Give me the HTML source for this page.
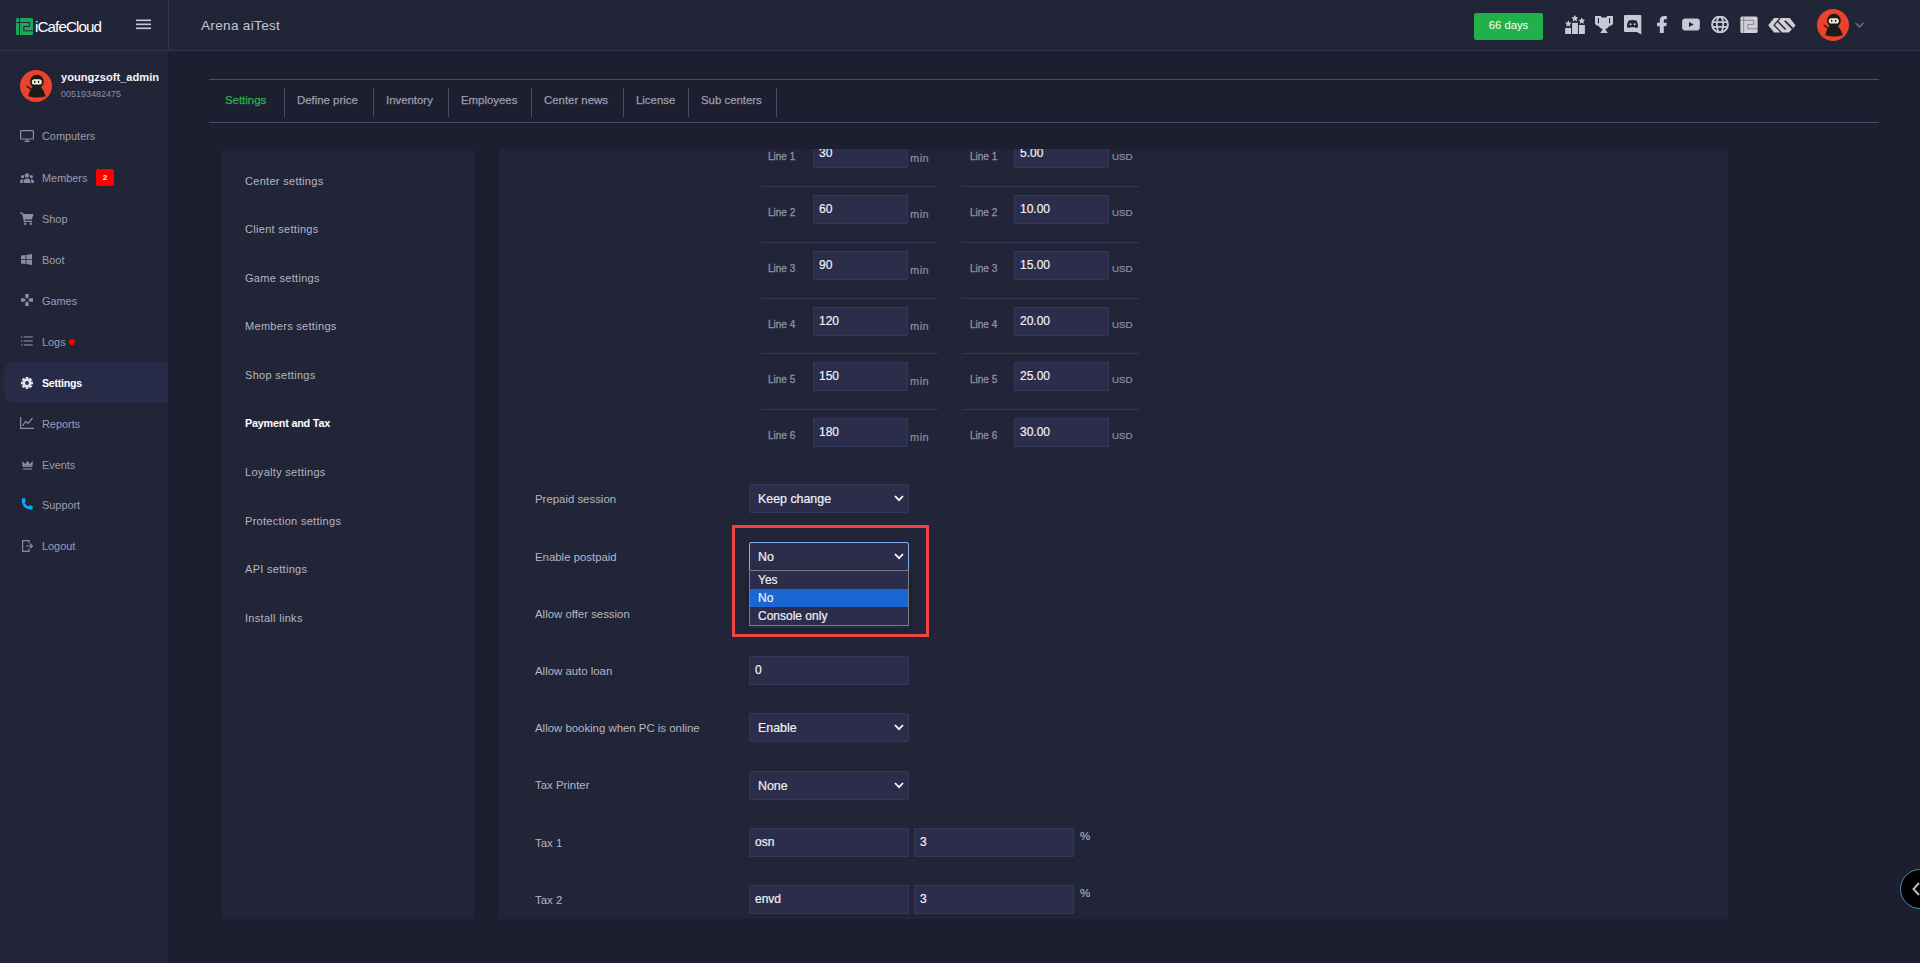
<!DOCTYPE html>
<html><head><meta charset="utf-8"><style>
*{margin:0;padding:0;box-sizing:border-box}
html,body{width:1920px;height:963px;overflow:hidden;background:#1d1e2f;font-family:"Liberation Sans",sans-serif}
.a{position:absolute;white-space:nowrap}
#hdr{position:absolute;left:0;top:0;width:1920px;height:51px;background:#222538;border-bottom:1px solid #32354f}
#hdrsep{position:absolute;left:168px;top:0;width:1px;height:50px;background:#32354f}
#side{position:absolute;left:0;top:51px;width:168px;height:912px;background:#222538}
.nav{position:absolute;left:42px;font-size:10.9px;color:#9a9db2;line-height:14px;white-space:nowrap}
.tabs{position:absolute;left:209px;top:79px;width:1670px;height:44px;border-top:1px solid #4a4c61;border-bottom:1px solid #4a4c61}
.tab{position:absolute;top:13px;font-size:11.4px;color:#9c9eae;-webkit-text-stroke:0.25px;line-height:14px;white-space:nowrap}
.tsep{position:absolute;top:8px;width:1px;height:29px;background:#4a4c61}
.card{position:absolute;background:#222538;border-radius:4px}
.sub{position:absolute;left:245px;font-size:11px;letter-spacing:0.3px;color:#b4b6c4;line-height:14px;white-space:nowrap}
.lbl{position:absolute;font-size:11.4px;color:#b4b6c4;line-height:14px;white-space:nowrap}
.inp{position:absolute;-webkit-text-stroke:0.2px #f0f0f5;background:#2b2d4b;height:29px;color:#f0f0f5;font-size:12px;line-height:27px;padding-left:5px;border:1px solid #34365a;white-space:nowrap}
.sel{position:absolute;-webkit-text-stroke:0.2px #f0f0f5;background:#2b2d4b;height:29px;color:#f0f0f5;font-size:12.4px;line-height:28px;padding-left:8px;border:1px solid #34365a;width:160px;border-radius:2px;white-space:nowrap}
.ln{position:absolute;font-size:10px;color:#8e90a3;-webkit-text-stroke:0.3px #8e90a3;line-height:12px;white-space:nowrap}
.unit{position:absolute;font-size:11px;letter-spacing:0.5px;color:#8e90a3;-webkit-text-stroke:0.2px #8e90a3;line-height:12px;white-space:nowrap}
.rowline{position:absolute;height:1px;background:#34375a}
.chev{position:absolute;right:4px;top:10px;width:10px;height:7px}
</style></head><body>
<div id="hdr"></div><div id="hdrsep"></div><div id="side"></div>
<svg class="a" style="left:16px;top:18px" width="17" height="17" viewBox="0 0 17 17">
<rect x="0" y="0" width="17" height="17" rx="1.5" fill="#1fa65a"/>
<path d="M3.5 0 V17 M0 4.5 H13.5 V8.5 H7.8 V12.8 H17" fill="none" stroke="#222538" stroke-width="1"/></svg>
<div class="a" style="left:35px;top:18px;font-size:15.2px;color:#fff;letter-spacing:-0.9px;line-height:18px">iCafeCloud</div>
<svg class="a" style="left:136px;top:19px" width="15" height="11" viewBox="0 0 15 11">
<rect x="0" y="0.5" width="15" height="1.6" fill="#c8cad6"/><rect x="0" y="4.5" width="15" height="1.6" fill="#c8cad6"/><rect x="0" y="8.5" width="15" height="1.6" fill="#c8cad6"/></svg>
<div class="a" style="left:201px;top:16.5px;font-size:13.6px;letter-spacing:0.3px;color:#c4c5cf;line-height:17px">Arena aiTest</div>
<div class="a" style="left:1474px;top:13px;width:69px;height:27px;background:#20b14a;border-radius:2px;color:#fff;font-size:11.3px;line-height:25.5px;text-align:center">66 days</div>
<svg class="a" style="left:1565px;top:15px" width="20" height="19" viewBox="0 0 20 19" fill="#c6c9d6">
<rect x="0.1" y="13" width="6" height="6"/><rect x="7.1" y="7.8" width="5.8" height="11.2"/><rect x="13.9" y="10" width="6" height="9"/>
<path d="M3.30 5.30 L4.33 7.38 L6.63 7.72 L4.96 9.34 L5.36 11.63 L3.30 10.55 L1.24 11.63 L1.64 9.34 L-0.03 7.72 L2.27 7.38Z"/><path d="M9.90 -0.10 L10.96 2.04 L13.32 2.39 L11.61 4.06 L12.02 6.41 L9.90 5.30 L7.78 6.41 L8.19 4.06 L6.48 2.39 L8.84 2.04Z"/><path d="M16.80 2.50 L17.83 4.58 L20.13 4.92 L18.46 6.54 L18.86 8.83 L16.80 7.75 L14.74 8.83 L15.14 6.54 L13.47 4.92 L15.77 4.58Z"/></svg>
<svg class="a" style="left:1595px;top:16px" width="18" height="17" viewBox="0 0 18 17">
<path d="M0 0 H5.8 L6.6 1.6 H11.4 L12.2 0 H18 V7.6 Q18 8.6 16.5 9.2 L14.3 10.2 Q13 12.2 10.3 13.3 L12.8 17 H5.2 L7.7 13.3 Q5 12.2 3.7 10.2 L1.5 9.2 Q0 8.6 0 7.6Z" fill="#c6c9d6"/>
<rect x="2.9" y="2" width="1.1" height="5.3" fill="#222538"/><rect x="14" y="2" width="1.1" height="5.3" fill="#222538"/></svg>
<svg class="a" style="left:1624px;top:15px" width="18" height="20" viewBox="0 0 18 20">
<path d="M1 0 H16.3 Q17.3 0 17.3 1 V19.5 L13.1 16.9 H1 Q0 16.9 0 15.9 V1 Q0 0 1 0Z" fill="#c6c9d6"/>
<path d="M4.6 5.6 Q8.6 4.2 12.5 5.6 Q14.2 8.5 14 12.2 Q12.8 12.9 11.6 13 L10.9 11.9 Q8.6 12.5 6.3 11.9 L5.6 13 Q4.3 12.9 3 12.2 Q2.9 8.5 4.6 5.6Z" fill="#222538"/>
<circle cx="6.6" cy="9.3" r="1.05" fill="#c6c9d6"/><circle cx="10.6" cy="9.3" r="1.05" fill="#c6c9d6"/></svg>
<svg class="a" style="left:1657px;top:16px" width="10" height="17" viewBox="0 0 10 17" fill="#c6c9d6">
<path d="M2.8 17 V10.2 H0 V6.8 H2.8 V4.6 Q2.8 0 7.2 0 H9.8 V3.3 H7.9 Q6.8 3.3 6.8 4.5 V6.8 H9.8 L9.3 10.2 H6.8 V17Z"/></svg>
<svg class="a" style="left:1682px;top:18px" width="18" height="13" viewBox="0 0 18 13">
<rect x="0.1" y="0.6" width="17.7" height="11.8" rx="3" fill="#c6c9d6"/><path d="M7 4 L11.8 6.5 L7 9Z" fill="#222538"/></svg>
<svg class="a" style="left:1711px;top:16px" width="18" height="17" viewBox="0 0 18 17" fill="none" stroke="#c6c9d6">
<circle cx="9" cy="8.5" r="7.9" stroke-width="2"/><ellipse cx="9" cy="8.5" rx="3.2" ry="8" stroke-width="1.8"/><path d="M1 6.1 H17 M1 10.9 H17" stroke-width="1.7"/></svg>
<svg class="a" style="left:1740px;top:16px" width="18" height="17" viewBox="0 0 18 17">
<rect x="0.4" y="0.4" width="17.2" height="16.6" rx="1.5" fill="#d0d0d6"/>
<path d="M3.7 0.4 V17 M0.4 4.3 H13.6 V8.4 H7.8 V12.8 H17.6" fill="none" stroke="#7d7f8e" stroke-width="0.9"/></svg>
<svg class="a" style="left:1768px;top:18px" width="28" height="15" viewBox="0 0 28 15">
<path d="M0.2 7.2 L6.1 0 H21.8 L27.6 7.4 L20.8 14.6 H6.1Z" fill="#d0d0d4"/>
<path d="M12.1 0.1 L6.1 7.2 L13.6 14.8" fill="none" stroke="#222538" stroke-width="1.3"/>
<path d="M9.8 3.5 L17.6 11.5" fill="none" stroke="#222538" stroke-width="1.5"/>
<path d="M16.9 2.9 L24.6 10.7" fill="none" stroke="#222538" stroke-width="1.8"/></svg>
<svg class="a" style="left:1817px;top:9px" width="32" height="32" viewBox="0 0 32 32"><circle cx="16" cy="16" r="16" fill="#ec412a"/>
<path d="M12.6 16.8 Q9.3 20.5 8.2 26.2 Q17 28.6 25.8 26.2 Q24 20.5 20.8 16.8Z" fill="#1c1b1c"/>
<circle cx="16.9" cy="11.6" r="6.9" fill="#1c1b1c"/>
<rect x="11.8" y="9.3" width="10" height="5.3" rx="2.6" fill="#f3ecdb"/>
<ellipse cx="14.7" cy="11.9" rx="0.8" ry="1.1" fill="#1c1b1c"/><ellipse cx="18.6" cy="11.9" rx="0.8" ry="1.1" fill="#1c1b1c"/>
<path d="M6.8 16.2 L11.3 19.4" stroke="#1c1b1c" stroke-width="1.5"/></svg>
<svg class="a" style="left:1855px;top:22px" width="9" height="6" viewBox="0 0 9 6"><path d="M0.5 0.8 L4.5 4.8 L8.5 0.8" fill="none" stroke="#6880aa" stroke-width="1.2"/></svg>
<svg class="a" style="left:20px;top:70px" width="32" height="32" viewBox="0 0 32 32"><circle cx="16" cy="16" r="16" fill="#ec412a"/>
<path d="M12.6 16.8 Q9.3 20.5 8.2 26.2 Q17 28.6 25.8 26.2 Q24 20.5 20.8 16.8Z" fill="#1c1b1c"/>
<circle cx="16.9" cy="11.6" r="6.9" fill="#1c1b1c"/>
<rect x="11.8" y="9.3" width="10" height="5.3" rx="2.6" fill="#f3ecdb"/>
<ellipse cx="14.7" cy="11.9" rx="0.8" ry="1.1" fill="#1c1b1c"/><ellipse cx="18.6" cy="11.9" rx="0.8" ry="1.1" fill="#1c1b1c"/>
<path d="M6.8 16.2 L11.3 19.4" stroke="#1c1b1c" stroke-width="1.5"/></svg>
<div class="a" style="left:61px;top:71px;font-size:11.1px;font-weight:bold;color:#f4f4f8;line-height:13px">youngzsoft_admin</div>
<div class="a" style="left:61px;top:89px;font-size:9px;color:#8c8fa3;line-height:11px">005193482475</div>
<div class="a" style="left:4px;top:362px;width:164px;height:41px;background:#282b47;border-radius:10px 0 0 10px"></div>
<div class="nav" style="top:128.5px">Computers</div>
<div class="nav" style="top:170.5px">Members</div>
<div class="nav" style="top:211.5px">Shop</div>
<div class="nav" style="top:252.5px">Boot</div>
<div class="nav" style="top:293.5px">Games</div>
<div class="nav" style="top:334.5px">Logs</div>
<div class="nav" style="top:375.5px;color:#fff;font-weight:bold;font-size:10.6px;letter-spacing:-0.25px">Settings</div>
<div class="nav" style="top:416.5px">Reports</div>
<div class="nav" style="top:457.5px">Events</div>
<div class="nav" style="top:497.5px">Support</div>
<div class="nav" style="top:538.5px">Logout</div>
<div class="a" style="left:96px;top:169px;width:18px;height:17px;background:#fe0000;border-radius:2px;color:#fff;font-size:8px;font-weight:bold;text-align:center;line-height:17px">2</div>
<div class="a" style="left:69px;top:339px;width:6px;height:6px;border-radius:50%;background:#fe0000"></div>
<svg class="a" style="left:20px;top:130px" width="14" height="12" viewBox="0 0 14 12" fill="none" stroke="#8a8ea6" stroke-width="1.2"><rect x="0.6" y="0.6" width="12.8" height="8.4" rx="0.8"/><path d="M7 9 V11 M4.5 11.4 H9.5"/></svg>
<svg class="a" style="left:20px;top:173px" width="14" height="10" viewBox="0 0 14 10" fill="#8a8ea6"><circle cx="7" cy="2.4" r="2.2"/><circle cx="2.6" cy="3.6" r="1.6"/><circle cx="11.4" cy="3.6" r="1.6"/><path d="M3.5 10 Q3.5 5.6 7 5.6 Q10.5 5.6 10.5 10Z M0 10 Q0 6.5 2.6 6.3 Q3.2 6.3 3.4 6.6 Q2.6 8 2.7 10Z M14 10 Q14 6.5 11.4 6.3 Q10.8 6.3 10.6 6.6 Q11.4 8 11.3 10Z"/></svg>
<svg class="a" style="left:20px;top:212px" width="14" height="13" viewBox="0 0 14 13" fill="#8a8ea6"><path d="M0 0.5 H2.8 L3.4 2 H13.5 L11.8 7.5 H4.6 L5 8.8 H12 V10 H4 L2 1.7 H0Z"/><circle cx="5.3" cy="11.7" r="1.2"/><circle cx="10.8" cy="11.7" r="1.2"/></svg>
<svg class="a" style="left:21px;top:254px" width="11" height="11" viewBox="0 0 11 11" fill="#8a8ea6"><path d="M0 1.6 L4.6 1 V5.2 H0Z M5.4 0.9 L11 0 V5.2 H5.4Z M0 5.9 H4.6 V10 L0 9.4Z M5.4 5.9 H11 V11 L5.4 10.1Z"/></svg>
<svg class="a" style="left:21px;top:294px" width="12" height="12" viewBox="0 0 12 12" fill="#8a8ea6"><path d="M4.3 0 H7.7 V3.3 L6 4.8 L4.3 3.3Z M4.3 12 H7.7 V8.7 L6 7.2 L4.3 8.7Z M0 4.3 V7.7 H3.3 L4.8 6 L3.3 4.3Z M12 4.3 V7.7 H8.7 L7.2 6 L8.7 4.3Z"/></svg>
<svg class="a" style="left:21px;top:336px" width="12" height="10" viewBox="0 0 12 10" fill="#8a8ea6"><rect x="0" y="0.3" width="1.3" height="1.3"/><rect x="0" y="4.3" width="1.3" height="1.3"/><rect x="0" y="8.3" width="1.3" height="1.3"/><rect x="2.8" y="0.4" width="9" height="1.1"/><rect x="2.8" y="4.4" width="9" height="1.1"/><rect x="2.8" y="8.4" width="9" height="1.1"/></svg>
<svg class="a" style="left:21px;top:377px" width="12" height="12" viewBox="-6 -6 12 12" fill="#dfe2ee"><circle r="4.4"/><rect x="-1.35" y="-6.1" width="2.7" height="3" transform="rotate(0)"/><rect x="-1.35" y="-6.1" width="2.7" height="3" transform="rotate(45)"/><rect x="-1.35" y="-6.1" width="2.7" height="3" transform="rotate(90)"/><rect x="-1.35" y="-6.1" width="2.7" height="3" transform="rotate(135)"/><rect x="-1.35" y="-6.1" width="2.7" height="3" transform="rotate(180)"/><rect x="-1.35" y="-6.1" width="2.7" height="3" transform="rotate(225)"/><rect x="-1.35" y="-6.1" width="2.7" height="3" transform="rotate(270)"/><rect x="-1.35" y="-6.1" width="2.7" height="3" transform="rotate(315)"/><circle r="1.9" fill="#282b47"/></svg>
<svg class="a" style="left:20px;top:417px" width="14" height="12" viewBox="0 0 14 12" fill="none" stroke="#8a8ea6" stroke-width="1.2"><path d="M0.6 0 V11.4 H14 M2.5 9 L5.5 4.5 L8 6.5 L12.5 1"/></svg>
<svg class="a" style="left:22px;top:461px" width="11" height="9" viewBox="0 0 11 9" fill="#8a8ea6"><path d="M0 0 L3.2 3 L5.5 0 L7.8 3 L11 0 L10.2 6 H0.8Z"/><path d="M1.8 4.6 H9.2 L9 5.2 H2Z" fill="#222538" opacity="0.5"/><rect x="1" y="7.4" width="9" height="1.1"/></svg>
<svg class="a" style="left:21px;top:498px" width="12" height="12" viewBox="0 0 12 12" fill="#0aa8ff"><path d="M0.6 1.6 Q0.6 0.4 1.8 0.3 L3.6 0.1 L5 3.3 L3.5 4.6 Q4.8 7.4 7.4 8.6 L8.7 7.1 L11.9 8.5 L11.7 10.3 Q11.6 11.7 10.3 11.7 Q5.5 11.6 2.6 8.3 Q0.6 5.8 0.6 1.6Z"/></svg>
<svg class="a" style="left:22px;top:540px" width="11" height="12" viewBox="0 0 11 12" fill="none" stroke="#8a8ea6" stroke-width="1.2"><path d="M7 3.3 V0.6 H0.6 V11.4 H7 V8.7"/><path d="M4 6 H10.5 M8.2 3.8 L10.5 6 L8.2 8.2"/></svg>
<div class="tabs">
<div class="tab" style="left:16px;color:#2cb54c">Settings</div><div class="tsep" style="left:75px"></div>
<div class="tab" style="left:88px">Define price</div><div class="tsep" style="left:164px"></div>
<div class="tab" style="left:177px">Inventory</div><div class="tsep" style="left:239px"></div>
<div class="tab" style="left:252px">Employees</div><div class="tsep" style="left:322px"></div>
<div class="tab" style="left:335px">Center news</div><div class="tsep" style="left:414px"></div>
<div class="tab" style="left:427px">License</div><div class="tsep" style="left:479px"></div>
<div class="tab" style="left:492px">Sub centers</div><div class="tsep" style="left:567px"></div>
</div>
<div class="card" style="left:221px;top:149px;width:254px;height:770px"></div>
<div class="sub" style="top:173.5px">Center settings</div>
<div class="sub" style="top:222px">Client settings</div>
<div class="sub" style="top:270.5px">Game settings</div>
<div class="sub" style="top:319px">Members settings</div>
<div class="sub" style="top:367.5px">Shop settings</div>
<div class="sub" style="top:416px;color:#fff;font-weight:bold;font-size:10.8px;letter-spacing:-0.2px">Payment and Tax</div>
<div class="sub" style="top:465px">Loyalty settings</div>
<div class="sub" style="top:513.5px">Protection settings</div>
<div class="sub" style="top:562px">API settings</div>
<div class="sub" style="top:611px">Install links</div>
<div class="card" style="left:499px;top:149px;width:1229px;height:770px;overflow:hidden;border-radius:0">
<div class="ln" style="left:269px;top:2.0px">Line 1</div>
<div class="inp" style="left:314px;top:-10px;width:95px">30</div>
<div class="unit" style="left:411px;top:2.5px">min</div>
<div class="ln" style="left:471px;top:2.0px">Line 1</div>
<div class="inp" style="left:515px;top:-10px;width:95px">5.00</div>
<div class="unit" style="left:613px;top:1.5px;font-size:9.8px;letter-spacing:0">USD</div>
<div class="ln" style="left:269px;top:58.0px">Line 2</div>
<div class="inp" style="left:314px;top:46px;width:95px">60</div>
<div class="unit" style="left:411px;top:58.5px">min</div>
<div class="ln" style="left:471px;top:58.0px">Line 2</div>
<div class="inp" style="left:515px;top:46px;width:95px">10.00</div>
<div class="unit" style="left:613px;top:57.5px;font-size:9.8px;letter-spacing:0">USD</div>
<div class="ln" style="left:269px;top:114.0px">Line 3</div>
<div class="inp" style="left:314px;top:102px;width:95px">90</div>
<div class="unit" style="left:411px;top:114.5px">min</div>
<div class="ln" style="left:471px;top:114.0px">Line 3</div>
<div class="inp" style="left:515px;top:102px;width:95px">15.00</div>
<div class="unit" style="left:613px;top:113.5px;font-size:9.8px;letter-spacing:0">USD</div>
<div class="ln" style="left:269px;top:170.0px">Line 4</div>
<div class="inp" style="left:314px;top:158px;width:95px">120</div>
<div class="unit" style="left:411px;top:170.5px">min</div>
<div class="ln" style="left:471px;top:170.0px">Line 4</div>
<div class="inp" style="left:515px;top:158px;width:95px">20.00</div>
<div class="unit" style="left:613px;top:169.5px;font-size:9.8px;letter-spacing:0">USD</div>
<div class="ln" style="left:269px;top:225.0px">Line 5</div>
<div class="inp" style="left:314px;top:213px;width:95px">150</div>
<div class="unit" style="left:411px;top:225.5px">min</div>
<div class="ln" style="left:471px;top:225.0px">Line 5</div>
<div class="inp" style="left:515px;top:213px;width:95px">25.00</div>
<div class="unit" style="left:613px;top:224.5px;font-size:9.8px;letter-spacing:0">USD</div>
<div class="ln" style="left:269px;top:281.0px">Line 6</div>
<div class="inp" style="left:314px;top:269px;width:95px">180</div>
<div class="unit" style="left:411px;top:281.5px">min</div>
<div class="ln" style="left:471px;top:281.0px">Line 6</div>
<div class="inp" style="left:515px;top:269px;width:95px">30.00</div>
<div class="unit" style="left:613px;top:280.5px;font-size:9.8px;letter-spacing:0">USD</div>
<div class="rowline" style="left:262px;top:37px;width:177px"></div>
<div class="rowline" style="left:463px;top:37px;width:177px"></div>
<div class="rowline" style="left:262px;top:93px;width:177px"></div>
<div class="rowline" style="left:463px;top:93px;width:177px"></div>
<div class="rowline" style="left:262px;top:149px;width:177px"></div>
<div class="rowline" style="left:463px;top:149px;width:177px"></div>
<div class="rowline" style="left:262px;top:204px;width:177px"></div>
<div class="rowline" style="left:463px;top:204px;width:177px"></div>
<div class="rowline" style="left:262px;top:260px;width:177px"></div>
<div class="rowline" style="left:463px;top:260px;width:177px"></div>
<div class="lbl" style="left:36px;top:343px">Prepaid session</div>
<div class="lbl" style="left:36px;top:401px">Enable postpaid</div>
<div class="lbl" style="left:36px;top:458px">Allow offer session</div>
<div class="lbl" style="left:36px;top:515px">Allow auto loan</div>
<div class="lbl" style="left:36px;top:572px">Allow booking when PC is online</div>
<div class="lbl" style="left:36px;top:629px">Tax Printer</div>
<div class="lbl" style="left:36px;top:687px">Tax 1</div>
<div class="lbl" style="left:36px;top:744px">Tax 2</div>
<div class="sel" style="left:250px;top:335px;">Keep change<svg class="chev" viewBox="0 0 10 7"><path d="M1 1 L5 5.2 L9 1" fill="none" stroke="#fff" stroke-width="1.8"/></svg></div>
<div class="sel" style="left:250px;top:450px;">No<svg class="chev" viewBox="0 0 10 7"><path d="M1 1 L5 5.2 L9 1" fill="none" stroke="#fff" stroke-width="1.8"/></svg></div>
<div class="sel" style="left:250px;top:393px;border:1px solid #80b0f2;line-height:28px;padding-left:8px">No<svg class="chev" viewBox="0 0 10 7"><path d="M1 1 L5 5.2 L9 1" fill="none" stroke="#fff" stroke-width="1.8"/></svg></div>
<div class="inp" style="left:250px;top:507px;width:160px">0</div>
<div class="sel" style="left:250px;top:564px;">Enable<svg class="chev" viewBox="0 0 10 7"><path d="M1 1 L5 5.2 L9 1" fill="none" stroke="#fff" stroke-width="1.8"/></svg></div>
<div class="sel" style="left:250px;top:622px;">None<svg class="chev" viewBox="0 0 10 7"><path d="M1 1 L5 5.2 L9 1" fill="none" stroke="#fff" stroke-width="1.8"/></svg></div>
<div class="inp" style="left:250px;top:679px;width:160px">osn</div>
<div class="inp" style="left:415px;top:679px;width:160px">3</div>
<div class="inp" style="left:250px;top:736px;width:160px">envd</div>
<div class="inp" style="left:415px;top:736px;width:160px">3</div>
<div class="unit" style="left:581px;top:681px;font-size:11.5px;color:#b4b6c4">%</div>
<div class="unit" style="left:581px;top:738px;font-size:11.5px;color:#b4b6c4">%</div>
<div class="a" style="left:250px;top:421px;width:160px;height:56px;background:#2b2d4b;border:1px solid #7b7b80;box-shadow:0 2px 6px rgba(0,0,0,0.35);font-size:12px;color:#f0f0f5;-webkit-text-stroke:0.2px #f0f0f5">
<div style="position:absolute;left:0;top:0;width:158px;height:18px;line-height:18px;padding-left:8px">Yes</div>
<div style="position:absolute;left:0;top:18px;width:158px;height:18px;line-height:18px;padding-left:8px;background:#1a67d4">No</div>
<div style="position:absolute;left:0;top:36px;width:158px;height:18px;line-height:18px;padding-left:8px">Console only</div></div>
<div class="a" style="left:233px;top:376px;width:197px;height:112px;border:3px solid #ef4444"></div>
</div>
<div class="a" style="left:1900px;top:869px;width:40px;height:40px;border-radius:50%;background:#000;border:1px solid #4b8fb0"></div>
<svg class="a" style="left:1912px;top:882px" width="8" height="14" viewBox="0 0 8 14"><path d="M7 1 L1.5 7 L7 13" fill="none" stroke="#bbb" stroke-width="2"/></svg>
</body></html>
